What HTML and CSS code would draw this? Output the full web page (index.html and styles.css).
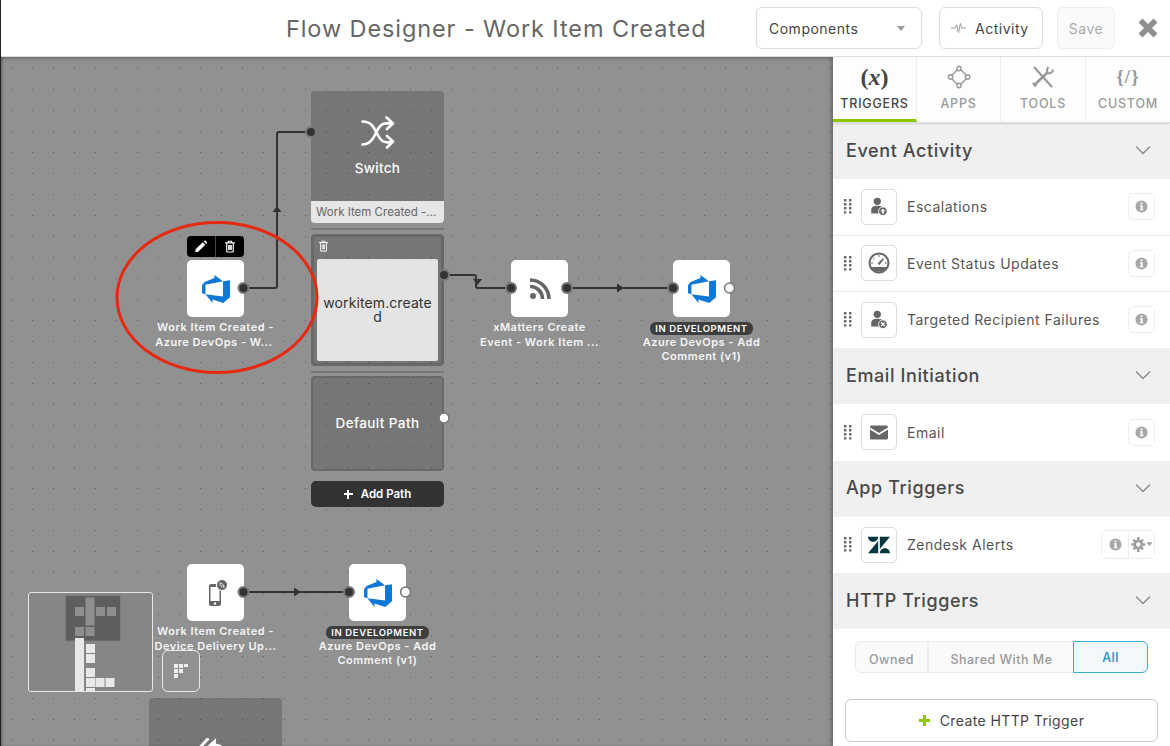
FILE: index.html
```html
<!DOCTYPE html>
<html lang="en">
<head>
    <meta charset="UTF-8">
    <title>Flow Designer - Work Item Created</title>
    <link rel="stylesheet" href="styles.css">
</head>
<body>
    <svg class="defs" aria-hidden="true">
        <symbol id="azure" viewBox="0 0 24 24"><path fill="#0f78d4" d="M0 8.877L2.247 5.91l8.405-3.416V.022l7.37 5.393L2.966 8.338v8.225L0 15.707zm24-4.45v14.651l-5.753 4.9-9.303-3.057v3.056l-5.978-7.416 15.057 1.798V5.415z"/></symbol>
        <symbol id="trash" viewBox="0 0 14 16"><path fill="none" stroke="currentColor" stroke-width="1.4" d="M1 3.5h12M3 3.5v10.2c0 .7.4 1.1 1 1.1h6c.6 0 1-.4 1-1.1V3.5M5 3.5V1.6h4v1.9M5.4 6v6.4M7 6v6.4M8.6 6v6.4"/></symbol>
        <symbol id="info" viewBox="0 0 14 14"><circle cx="7" cy="7" r="6.5" fill="#a8a8a8"/><path fill="#fff" d="M6 2.6h2v1.9H6zM5.4 5.6h2.8v4.1h.8v1.4H5.2V9.7h1V7H5.4z"/></symbol>
        <symbol id="grip" viewBox="0 0 8 15"><path fill="#666" d="M0 0h2.4v2.4H0zM5 0h2.4v2.4H5zM0 4h2.4v2.4H0zM5 4h2.4v2.4H5zM0 8h2.4v2.4H0zM5 8h2.4v2.4H5zM0 12.2h2.4v2.4H0zM5 12.2h2.4v2.4H5z"/></symbol>
        <symbol id="chevron" viewBox="0 0 16 10"><path fill="none" stroke="#8a8a8a" stroke-width="1.3" d="M1 1.5l7 7 7-7"/></symbol>
        <symbol id="person" viewBox="0 0 20 22"><circle cx="8" cy="5" r="4.2" fill="#666"/><path fill="#666" d="M1 19v-4.5C1 11.5 3.5 10 8 10s5.5 1 6.5 2.5A6 6 0 0 0 10 19z"/><circle cx="14.5" cy="16.5" r="5" fill="#666" stroke="#fff"/></symbol>
    </svg>

    <header class="topbar">
        <h1 class="page-title">Flow Designer - Work Item Created</h1>
        <div class="top-actions">
            <button class="top-btn components-btn">Components <span class="caret"></span></button>
            <button class="top-btn activity-btn">
                <svg class="pulse" viewBox="0 0 16 12"><path fill="none" stroke="#999" d="M0 6h4.5L6 2.5l2 8.5 2-10 1.5 5H16"/></svg>
                Activity
            </button>
            <button class="top-btn save-btn">Save</button>
            <svg class="close-icon" viewBox="0 0 20 20"><path fill="none" stroke="#8f8f8f" stroke-width="5.5" d="M2.5 2.5l15 15M17.5 2.5l-15 15"/></svg>
        </div>
    </header>

    <main class="workspace">
        <section class="canvas">
            <div class="block switch-block">
                <div class="switch-body">
                    <svg class="shuffle" viewBox="0 0 34 34"><path fill="none" stroke="#fff" stroke-width="2.6" stroke-linecap="round" stroke-linejoin="round" d="M1.5 5.5C11 5.5 13 12 16.5 18.5S23 28 32 25.5M1.5 28.5C11 28.5 13 20 17 13S24 7.5 32 7.5M25.5 1.5L32 7.5l-6 5.5M26 20l6 5.5-6 6"/></svg>
                    <span>Switch</span>
                </div>
                <div class="switch-foot">Work Item Created -...</div>
            </div>
            <div class="divider divider-top"></div>
            <div class="block path-block">
                <svg class="path-trash"><use href="#trash"/></svg>
                <div class="path-inner">workitem.created</div>
            </div>
            <div class="divider divider-bottom"></div>
            <div class="block default-block">Default Path</div>
            <button class="add-path"><span class="add-plus"></span>Add Path</button>
            <div class="block partial-block">
                <svg class="reply-icon" viewBox="0 0 34 24"><path fill="none" stroke="#fff" stroke-width="3" d="M10 0L1 10l9 10"/><path fill="#fff" d="M18 0L7 10l11 11v-6c7 0 11 2 14 8 0-9-5-16-14-17z"/></svg>
            </div>

            <div class="node-tools">
                <div class="tool-cell">
                    <svg class="tool-icon" viewBox="0 0 14 14"><path fill="#fff" d="M.5 10.5L9 2l3 3-8.5 8.5H.5zM10 1l1-.8c.4-.3.8-.3 1.2 0l1.6 1.6c.3.4.3.8 0 1.2l-.8 1z"/></svg>
                </div>
                <div class="tool-cell">
                    <svg class="tool-icon"><use href="#trash"/></svg>
                </div>
            </div>

            <div class="node node-a">
                <div class="node-box"><svg class="azure-icon"><use href="#azure"/></svg></div>
                <div class="node-label">Work Item Created -<br>Azure DevOps - W...&nbsp;</div>
            </div>
            <div class="node node-b">
                <div class="node-box">
                    <svg class="rss-icon" viewBox="0 0 22 22"><circle cx="4" cy="18" r="3" fill="#666"/><path fill="none" stroke="#666" stroke-width="3.6" d="M1 8.5c7 0 12.5 5.5 12.5 12.5M1 2c10.5 0 19 8.5 19 19"/></svg>
                </div>
                <div class="node-label">xMatters Create<br>Event - Work Item ...</div>
            </div>
            <div class="node node-c">
                <div class="node-box"><svg class="azure-icon"><use href="#azure"/></svg></div>
                <div class="badge">IN DEVELOPMENT</div>
                <div class="node-label">Azure DevOps - Add<br>Comment (v1)</div>
            </div>
            <div class="node node-d">
                <div class="node-box">
                    <svg class="device-icon" viewBox="0 0 20 28"><rect x="1" y="5" width="12" height="22" rx="2" fill="#666"/><rect x="2.5" y="8" width="9" height="14" fill="#fff"/><circle cx="7" cy="24.5" r="1.2" fill="#fff"/><circle cx="14" cy="6" r="5.5" fill="#666" stroke="#fff"/><path fill="none" stroke="#fff" d="M11.5 4c2.5 0 4.5 2 4.5 4.5M11.5 6c1.5 0 2.5 1 2.5 2.5"/></svg>
                </div>
                <div class="node-label">Work Item Created -<br>Device Delivery Up...</div>
            </div>
            <div class="node node-e">
                <div class="node-box"><svg class="azure-icon"><use href="#azure"/></svg></div>
                <div class="badge">IN DEVELOPMENT</div>
                <div class="node-label">Azure DevOps - Add<br>Comment (v1)</div>
            </div>

            <svg class="wires" viewBox="1 57 832 689">
                <g fill="none" stroke="#333" stroke-width="2">
                    <path d="M243 288h32q2 0 2-2V134q0-2 2-2h31"/>
                    <path d="M443 275h31q2 0 2 2v9q0 2 2 2h33"/>
                    <path d="M567 288h106"/>
                    <path d="M243 592h106"/>
                </g>
                <g fill="#333">
                    <path d="M277 206l4.5 6h-9z"/>
                    <path d="M473 279h9l-4.5 6z"/>
                    <path d="M617 283.5l7 4.5-7 4.5z"/>
                    <path d="M294 587.5l7 4.5-7 4.5z"/>
                </g>
                <g fill="#333" stroke="#777" stroke-width="2">
                    <circle cx="243.5" cy="288" r="5"/>
                    <circle cx="311" cy="132" r="5"/>
                    <circle cx="444" cy="275" r="5"/>
                    <circle cx="511" cy="288" r="5"/>
                    <circle cx="567" cy="288" r="5"/>
                    <circle cx="673" cy="288" r="5"/>
                    <circle cx="243.5" cy="592" r="5"/>
                    <circle cx="349" cy="592" r="5"/>
                </g>
                <g fill="#fff" stroke="#777" stroke-width="1.5">
                    <circle cx="729.5" cy="288" r="5"/>
                    <circle cx="444" cy="418" r="5"/>
                    <circle cx="405.5" cy="592" r="5"/>
                </g>
                <ellipse cx="217" cy="297.5" rx="100" ry="75" fill="none" stroke="#e62a12" stroke-width="3"/>
            </svg>

            <div class="minimap">
                <svg viewBox="28 592 125 100">
                    <rect x="65.5" y="595.5" width="55" height="45.5" fill="#5e5e5e" stroke="#7d7d7d"/>
                    <g fill="#8e8e8e">
                        <rect x="75" y="607" width="9" height="9"/>
                        <rect x="85.5" y="597.5" width="9" height="28"/>
                        <rect x="96" y="607" width="9" height="9"/>
                        <rect x="107" y="607" width="9" height="9"/>
                        <rect x="75" y="627" width="9" height="9"/>
                        <rect x="85.5" y="627" width="9" height="9"/>
                    </g>
                    <g fill="#e8e8e8">
                        <rect x="75" y="638" width="9" height="54"/>
                        <rect x="86" y="644" width="9" height="9"/>
                        <rect x="86" y="654" width="9" height="9"/>
                        <rect x="86" y="668" width="9" height="9"/>
                        <rect x="86" y="678" width="9" height="9"/>
                        <rect x="95.5" y="678" width="9" height="9"/>
                        <rect x="105.5" y="678" width="9" height="9"/>
                        <rect x="86" y="688" width="9" height="4"/>
                    </g>
                </svg>
            </div>
            <div class="map-toggle">
                <svg viewBox="0 0 14 14"><path fill="#eee" d="M0 0h4v4H0zM5 0h4v4H5zM10 0h4v3h-4zM0 5h4v4H0zM5 5h4v4H5zM0 10h4v4H0z"/></svg>
            </div>
        </section>

        <aside class="sidebar">
            <nav class="tabs">
                <div class="tab tab-active"><span class="tab-glyph tab-x">(<i>x</i>)</span>TRIGGERS</div>
                <div class="tab">
                    <svg class="tab-icon" viewBox="0 0 24 24"><g fill="none" stroke="#999" stroke-width="1.4"><path d="M10.5 4.5l-6 6M13.5 4.5l6 6M4.5 13.5l6 6M19.5 13.5l-6 6"/><circle cx="12" cy="3.5" r="2.2"/><circle cx="3.5" cy="12" r="2.2"/><circle cx="20.5" cy="12" r="2.2"/><circle cx="12" cy="20.5" r="2.2"/></g></svg>
                    APPS
                </div>
                <div class="tab">
                    <svg class="tab-icon" viewBox="0 0 24 24"><g fill="none" stroke="#999"><path stroke-width="2.2" d="M3 2l18 20"/><path stroke-width="2.6" d="M17 7L3.5 20"/><path stroke-width="2" d="M22 4.5c0 2.5-2.5 4.5-5 3.5-1.5-1.5-1.5-4 .5-6"/><path stroke-width="2.5" d="M2 18l3 3.5"/></g></svg>
                    TOOLS
                </div>
                <div class="tab"><span class="tab-glyph tab-code">{/}</span>CUSTOM</div>
            </nav>

            <div class="section-head">Event Activity <svg class="chevron"><use href="#chevron"/></svg></div>
            <div class="row">
                <svg class="grip"><use href="#grip"/></svg>
                <div class="row-icon">
                    <svg class="icon-18" viewBox="0 0 20 22"><use href="#person"/><path fill="#fff" d="M14.5 13.5l3 3h-2v3h-2v-3h-2z"/></svg>
                </div>
                <span class="row-name">Escalations</span>
                <div class="row-btn"><svg class="info-icon"><use href="#info"/></svg></div>
            </div>
            <div class="row">
                <svg class="grip"><use href="#grip"/></svg>
                <div class="row-icon">
                    <svg class="icon-22" viewBox="0 0 22 22"><circle cx="11" cy="11" r="9.5" fill="none" stroke="#666" stroke-width="2"/><path fill="#666" d="M3 15h16a9.5 9.5 0 0 1-16 0zM15 6l1 1-4.5 6-2-1.500z"/><path stroke="#666" d="M11 3v2M5 5.500l1.500 1.500M3 11h2M17 11h2"/></svg>
                </div>
                <span class="row-name">Event Status Updates</span>
                <div class="row-btn"><svg class="info-icon"><use href="#info"/></svg></div>
            </div>
            <div class="row">
                <svg class="grip"><use href="#grip"/></svg>
                <div class="row-icon">
                    <svg class="icon-18" viewBox="0 0 20 22"><use href="#person"/><path fill="none" stroke="#fff" stroke-width="1.4" d="M12.5 14.5l4 4M16.5 14.5l-4 4"/></svg>
                </div>
                <span class="row-name">Targeted Recipient Failures</span>
                <div class="row-btn"><svg class="info-icon"><use href="#info"/></svg></div>
            </div>

            <div class="section-head">Email Initiation <svg class="chevron"><use href="#chevron"/></svg></div>
            <div class="row">
                <svg class="grip"><use href="#grip"/></svg>
                <div class="row-icon">
                    <svg class="icon-18" viewBox="0 0 18 14"><path fill="#666" d="M1.5 0h15c.8 0 1.5.7 1.5 1.5v.5L9 7.5 0 2v-.5C0 .7.7 0 1.5 0zM0 4l9 5.500L18 4v8.500c0 .8-.7 1.500-1.500 1.500h-15C.7 14 0 13.300 0 12.500z"/></svg>
                </div>
                <span class="row-name">Email</span>
                <div class="row-btn"><svg class="info-icon"><use href="#info"/></svg></div>
            </div>

            <div class="section-head">App Triggers <svg class="chevron"><use href="#chevron"/></svg></div>
            <div class="row">
                <svg class="grip"><use href="#grip"/></svg>
                <div class="row-icon">
                    <svg class="icon-22" viewBox="0 0 24 24"><path fill="#03363d" d="M12.914 2.904V16.29L24 2.905H12.914zM0 2.906C0 5.966 2.483 8.45 5.543 8.45s5.542-2.484 5.543-5.544H0zm11.086 4.807L0 21.096h11.086V7.713zm7.37 7.84c-3.063 0-5.542 2.48-5.542 5.543H24c0-3.06-2.48-5.543-5.543-5.543z"/></svg>
                </div>
                <span class="row-name">Zendesk Alerts</span>
                <div class="row-btn-group">
                    <div class="group-cell"><svg class="info-icon"><use href="#info"/></svg></div>
                    <div class="group-cell">
                        <svg class="gear-icon" viewBox="0 0 20 14"><g fill="#a0a0a0"><circle cx="6.5" cy="7" r="4.5"/><path stroke="#a0a0a0" stroke-width="2.4" d="M6.5 0v14M0 7h13M2 2.5l9 9M11 2.5l-9 9"/><path d="M14 5h6l-3 3.5z"/></g><circle cx="6.5" cy="7" r="2" fill="#fff"/></svg>
                    </div>
                </div>
            </div>

            <div class="section-head">HTTP Triggers <svg class="chevron"><use href="#chevron"/></svg></div>
            <div class="http-body">
                <div class="segments">
                    <div class="segment seg-owned">Owned</div>
                    <div class="segment seg-shared">Shared With Me</div>
                    <div class="segment seg-all">All</div>
                </div>
                <button class="create-btn"><span class="create-plus"></span>Create HTTP Trigger</button>
            </div>
        </aside>
    </main>
</body>
</html>
```

FILE: styles.css
```css
* {
    box-sizing: border-box;
}

body {
    margin: 0;
    height: 100vh;
    overflow: hidden;
    display: flex;
    flex-direction: column;
    font-family: 'Inter', 'Liberation Sans', sans-serif;
    color: #444;
    background-color: #fff;
    border-left: 1px solid #222;
}

button {
    font-family: inherit;
}

.defs {
    position: absolute;
    width: 0;
    height: 0;
}

/* top bar */
.topbar {
    height: 57px;
    flex: none;
    display: flex;
    align-items: center;
    background-color: #fff;
    border-bottom: 1px solid #ddd;
    position: relative;
    z-index: 2;
}

.page-title {
    margin: 0 0 0 285px;
    font-size: 23.5px;
    font-weight: 400;
    letter-spacing: 0.9px;
    color: #666;
    white-space: nowrap;
}

.top-actions {
    margin-left: auto;
    display: flex;
    align-items: center;
    padding-right: 12px;
}

.top-btn {
    height: 42px;
    margin: 0;
    border: 1px solid #ddd;
    border-radius: 6px;
    background-color: #fff;
    font-size: 14px;
    letter-spacing: 0.5px;
    color: #444;
    display: flex;
    align-items: center;
    white-space: nowrap;
}

.components-btn {
    width: 166px;
    padding: 0 12px;
    justify-content: space-between;
}

.caret {
    width: 0;
    height: 0;
    margin-right: 4px;
    border-left: 4px solid transparent;
    border-right: 4px solid transparent;
    border-top: 5px solid #999;
}

.activity-btn {
    width: 104px;
    margin-left: 17px;
    padding: 0 0 0 11px;
    gap: 9px;
}

.pulse {
    width: 15px;
    height: 12px;
}

.save-btn {
    width: 58px;
    margin-left: 14px;
    justify-content: center;
    background-color: #fafafa;
    border-color: #eee;
    color: #aaa;
}

.close-icon {
    width: 20px;
    height: 20px;
    margin-left: 23px;
}

/* layout under the bar */
.workspace {
    flex: 1;
    display: flex;
    min-height: 0;
}

.canvas {
    position: relative;
    flex: 1;
    overflow: hidden;
    background-color: #919191;
    background-image: radial-gradient(circle, #5c5c5c 0.5px, transparent 1px);
    background-size: 21px 21px;
    background-position: 0 1px;
    box-shadow: inset 0 3px 4px -2px rgba(0, 0, 0, 0.3), inset 2px 0 3px -1px rgba(0, 0, 0, 0.3);
}

/* flow blocks, translucent so the canvas dots show through */
.block {
    position: absolute;
    left: 310px;
    width: 133px;
    background-color: rgba(0, 0, 0, 0.18);
    border-radius: 4px;
}

.switch-block {
    top: 34px;
    height: 132px;
    display: flex;
    flex-direction: column;
}

.switch-body {
    flex: 1;
    display: flex;
    flex-direction: column;
    align-items: center;
    padding-top: 25px;
    gap: 10px;
    font-size: 13.5px;
    font-weight: 500;
    letter-spacing: 0.3px;
    color: #fff;
}

.shuffle {
    width: 34px;
    height: 34px;
}

.switch-foot {
    height: 22px;
    padding-left: 5px;
    line-height: 22px;
    font-size: 11.5px;
    color: #666;
    background-color: #e6e6e6;
    border-radius: 0 0 4px 4px;
}

.divider {
    position: absolute;
    left: 310px;
    width: 133px;
    height: 2px;
    background-color: #787878;
}

.divider-top {
    top: 171px;
}

.divider-bottom {
    top: 314px;
}

.path-block {
    top: 177px;
    height: 132px;
    border: 3px solid #696969;
    padding: 22px 3px 2px;
}

.path-trash {
    position: absolute;
    left: 4px;
    top: 3px;
    width: 11px;
    height: 12px;
    color: #e6e6e6;
}

.path-inner {
    height: 100%;
    padding: 0 5px;
    display: flex;
    align-items: center;
    text-align: center;
    word-break: break-all;
    font-size: 14px;
    letter-spacing: 0.1px;
    line-height: 14px;
    color: #333;
    background-color: #e4e4e4;
    border-radius: 2px;
}

.default-block {
    top: 319px;
    height: 95px;
    padding-bottom: 2px;
    border: 2px solid #696969;
    display: flex;
    align-items: center;
    justify-content: center;
    font-size: 13.5px;
    font-weight: 500;
    letter-spacing: 0.4px;
    color: #fff;
}

.add-path {
    position: absolute;
    left: 310px;
    top: 424px;
    width: 133px;
    height: 26px;
    padding: 0;
    display: flex;
    align-items: center;
    justify-content: center;
    gap: 8px;
    border: none;
    border-radius: 5px;
    background-color: #333;
    color: #fff;
    font-size: 11.5px;
    font-weight: 600;
}

.add-plus {
    width: 9px;
    height: 9px;
    background:
        linear-gradient(#fff, #fff) center / 9px 2px no-repeat,
        linear-gradient(#fff, #fff) center / 2px 9px no-repeat;
}

.partial-block {
    left: 148px;
    top: 641px;
    height: 100px;
}

.reply-icon {
    position: absolute;
    left: 50px;
    top: 40px;
    width: 32px;
    height: 23px;
}

/* nodes */
.node {
    position: absolute;
    width: 57px;
    display: flex;
    flex-direction: column;
    align-items: center;
}

.node-a {
    left: 186px;
    top: 203px;
}

.node-b {
    left: 510px;
    top: 203px;
}

.node-c {
    left: 672px;
    top: 203px;
}

.node-d {
    left: 186px;
    top: 507px;
}

.node-e {
    left: 348px;
    top: 507px;
}

.node-box {
    width: 57px;
    height: 57px;
    flex: none;
    display: flex;
    align-items: center;
    justify-content: center;
    background-color: #fff;
    border-radius: 5px;
}

.azure-icon {
    width: 28px;
    height: 28px;
}

.rss-icon {
    width: 22px;
    height: 22px;
}

.device-icon {
    width: 20px;
    height: 28px;
    margin-left: 4px;
}

.node-label {
    width: 150px;
    flex: none;
    margin-top: 3px;
    text-align: center;
    font-size: 11px;
    font-weight: 600;
    letter-spacing: 0.5px;
    line-height: 15px;
    color: #f5f5f5;
}

.badge {
    flex: none;
    margin-top: 5px;
    margin-bottom: -1px;
    padding: 0 5px;
    height: 13px;
    line-height: 13px;
    font-size: 9.5px;
    font-weight: 600;
    letter-spacing: 0.6px;
    white-space: nowrap;
    color: #fff;
    background-color: #3e3e3e;
    border-radius: 6px;
}

.badge + .node-label {
    margin-top: 1px;
    line-height: 14px;
}

.node-tools {
    position: absolute;
    left: 186px;
    top: 179px;
    width: 57px;
    height: 21px;
    display: flex;
    color: #fff;
    background-color: #000;
    border-radius: 4px;
}

.tool-cell {
    flex: 1;
    display: flex;
    align-items: center;
    justify-content: center;
}

.tool-cell + .tool-cell {
    border-left: 1px solid #444;
}

.tool-icon {
    width: 12px;
    height: 13px;
}

.wires {
    position: absolute;
    left: 0;
    top: 0;
    width: 832px;
    height: 689px;
    pointer-events: none;
}

.minimap {
    position: absolute;
    left: 27px;
    top: 535px;
    width: 125px;
    height: 100px;
    overflow: hidden;
    border: 1px solid #e8e8e8;
    border-radius: 3px;
    background-color: #868686;
}

.minimap svg {
    display: block;
    width: 125px;
    height: 100px;
    margin: -1px;
}

.map-toggle {
    position: absolute;
    left: 161px;
    top: 593px;
    width: 38px;
    height: 42px;
    display: flex;
    align-items: center;
    justify-content: center;
    border: 1px solid #e8e8e8;
    border-radius: 6px;
}

.map-toggle svg {
    width: 14px;
    height: 14px;
}

/* sidebar */
.sidebar {
    width: 337px;
    flex: none;
    overflow: hidden;
    background-color: #fff;
    box-shadow: -2px 0 4px rgba(0, 0, 0, 0.25);
    position: relative;
}

.tabs {
    height: 66px;
    display: grid;
    grid-template-columns: 84px 84px 85px 84px;
    background-color: #fdfdfd;
    border-bottom: 1px solid #ddd;
    box-shadow: 0 1px 2px rgba(0, 0, 0, 0.12);
    position: relative;
}

.tab {
    display: flex;
    flex-direction: column;
    align-items: center;
    padding-top: 8px;
    font-size: 12.5px;
    font-weight: 500;
    letter-spacing: 0.8px;
    color: #999;
    border-right: 1px solid #eee;
}

.tab:last-child {
    border-right: none;
}

.tab-active {
    color: #444;
    border-bottom: 3px solid #8cc800;
}

.tab-icon,
.tab-glyph {
    height: 24px;
    margin-bottom: 7px;
}

.tab-icon {
    width: 24px;
}

.tab-glyph {
    line-height: 24px;
    font-family: 'Liberation Serif', serif;
    letter-spacing: 0;
}

.tab-x {
    font-size: 24px;
    font-weight: 700;
}

.tab-code {
    font-size: 19px;
    font-weight: 700;
    letter-spacing: 1px;
}

.section-head {
    height: 56.25px;
    padding: 0 19px 2px 13px;
    display: flex;
    align-items: center;
    justify-content: space-between;
    font-size: 18px;
    font-weight: 500;
    letter-spacing: 0.6px;
    color: #484848;
    background-color: #f0f0f0;
}

.chevron {
    width: 16px;
    height: 10px;
}

.row {
    height: 56.25px;
    padding: 0 15px 0 11px;
    display: flex;
    align-items: center;
    background-color: #fff;
    border-bottom: 1px solid #e8e8e8;
}

.row:has(+ .section-head) {
    border-bottom: none;
}

.grip {
    width: 8px;
    height: 15px;
    flex: none;
}

.row-icon {
    width: 36px;
    height: 36px;
    flex: none;
    margin-left: 9px;
    display: flex;
    align-items: center;
    justify-content: center;
    border: 1px solid #ddd;
    border-radius: 5px;
}

.icon-18 {
    width: 18px;
    height: 19px;
}

.icon-22 {
    width: 22px;
    height: 22px;
}

.row-name {
    flex: 1;
    margin-left: 10px;
    font-size: 14px;
    color: #555;
    letter-spacing: 0.5px;
}

.row-btn,
.group-cell {
    width: 27px;
    height: 27px;
    display: flex;
    align-items: center;
    justify-content: center;
}

.row-btn {
    border: 1px solid #eee;
    border-radius: 5px;
}

.row-btn-group {
    display: flex;
    border: 1px solid #eee;
    border-radius: 6px;
}

.group-cell {
    width: 26px;
}

.group-cell + .group-cell {
    border-left: 1px solid #eee;
}

.info-icon {
    width: 13px;
    height: 13px;
}

.gear-icon {
    width: 22px;
    height: 15px;
}

.http-body {
    padding: 12px 12px 0;
}

.segments {
    margin: 0 10px;
    height: 32px;
    display: flex;
    background-color: #fafafa;
    border: 1px solid #eaeaea;
    border-radius: 6px;
}

.segment {
    display: flex;
    align-items: center;
    justify-content: center;
    padding-top: 5px;
    font-size: 12.5px;
    font-weight: 500;
    letter-spacing: 0.5px;
    color: #999;
}

.seg-owned {
    width: 73px;
    border-right: 2px solid #eee;
}

.seg-shared {
    width: 145px;
}

.seg-all {
    flex: 1;
    margin: -1px;
    padding: 0;
    color: #1b8fc6;
    background-color: #f2f8fb;
    border: 1px solid #38a9d9;
    border-radius: 0 6px 6px 0;
}

.create-btn {
    width: 313px;
    height: 43px;
    margin-top: 26px;
    display: flex;
    align-items: center;
    justify-content: center;
    gap: 10px;
    font-size: 14px;
    color: #444;
    letter-spacing: 0.4px;
    background-color: #fff;
    border: 1px solid #ccc;
    border-radius: 6px;
}

.create-plus {
    width: 11px;
    height: 11px;
    background:
        linear-gradient(#8cc800, #8cc800) center / 11px 3px no-repeat,
        linear-gradient(#8cc800, #8cc800) center / 3px 11px no-repeat;
}
```
